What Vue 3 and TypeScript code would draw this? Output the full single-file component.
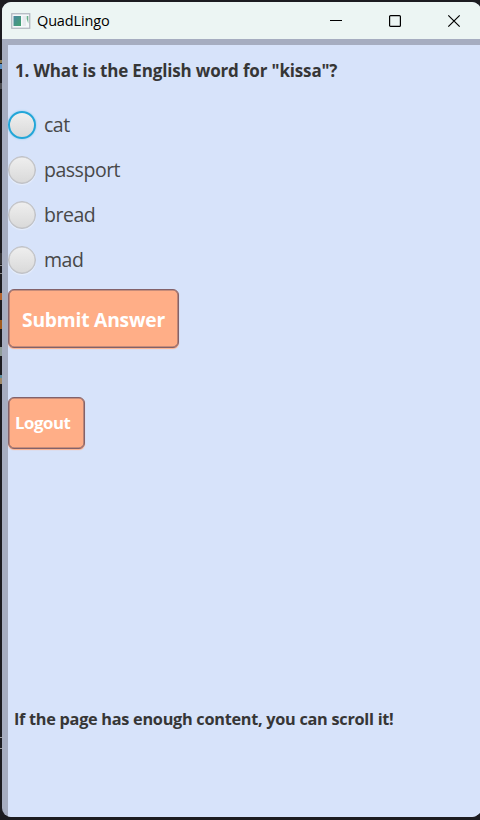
<script setup lang="ts">
import { ref } from 'vue'

interface Speck {
  top: number
  height: number
  color: string
}

const answers: string[] = ['cat', 'passport', 'bread', 'mad']
const focused = ref<string>('cat')

const specks: Speck[] = [
  { top: 60, height: 3, color: '#8a7a50' },
  { top: 64, height: 5, color: '#5b93c8' },
  { top: 83, height: 6, color: '#4a4b4f' },
  { top: 253, height: 11, color: '#343437' },
  { top: 265, height: 1, color: '#8a8a8c' },
  { top: 273, height: 1, color: '#8a8a8c' },
  { top: 293, height: 7, color: '#b5652f' },
  { top: 320, height: 9, color: '#a05a1c' },
  { top: 347, height: 9, color: '#8f9c98' },
  { top: 375, height: 3, color: '#5e8ea0' },
  { top: 378, height: 6, color: '#a08a68' },
  { top: 737, height: 1, color: '#9a9a9c' },
  { top: 748, height: 1, color: '#9a9a9c' },
]
</script>

<template>
  <div class="desktop">
    <span
      v-for="s in specks"
      :key="s.top"
      class="speck"
      :style="{ top: s.top + 'px', height: s.height + 'px', background: s.color }"
    ></span>
    <div class="window">
      <header class="titlebar">
        <svg class="app-icon" width="20" height="16" viewBox="0 0 20 16">
          <defs>
            <linearGradient id="tile" x1="0" y1="0" x2="1" y2="1">
              <stop offset="0" stop-color="#4a86a0" />
              <stop offset="1" stop-color="#43a46f" />
            </linearGradient>
          </defs>
          <rect x="0.75" y="0.75" width="18" height="14.5" fill="#f5f8fa" stroke="#aeb4bd" stroke-width="1.2" />
          <rect x="2.5" y="3" width="7.5" height="10" fill="url(#tile)" />
          <rect x="11.5" y="3" width="3.5" height="10" fill="#e6eaee" />
          <path d="M15.7 3H17.3V10.5L15.7 6Z" fill="#6bb08b" />
        </svg>
        <span class="app-name">QuadLingo</span>
        <div class="controls">
          <svg width="14" height="14" viewBox="0 0 14 14"><path d="M1 6.5H13" /></svg>
          <svg width="14" height="14" viewBox="0 0 14 14"><rect x="1.6" y="1.6" width="10.8" height="10.8" rx="1" /></svg>
          <svg width="14" height="14" viewBox="0 0 14 14"><path d="M1.3 1.3L12.7 12.7M12.7 1.3L1.3 12.7" /></svg>
        </div>
      </header>
      <main class="page">
        <h1 class="question"><span>1. What is the English word for "kissa"?</span></h1>
        <div class="answers">
          <label v-for="a in answers" :key="a" class="answer" @click="focused = a">
            <span class="radio" :class="{ focused: focused === a }"></span>
            <span class="answer-text">{{ a }}</span>
          </label>
        </div>
        <button class="button submit"><span>Submit Answer</span></button>
        <button class="button logout"><span>Logout</span></button>
        <p class="hint"><span>If the page has enough content, you can scroll it!</span></p>
      </main>
    </div>
  </div>
</template>

<style>
body {
  margin: 0;
  overflow: hidden;
}
</style>

<style scoped>
.desktop {
  position: relative;
  box-sizing: border-box;
  width: 480px;
  height: 820px;
  padding: 2px 0 3px 2px;
  background: #1c1c20;
  font-family: 'Open Sans', 'Noto Sans', sans-serif;
  overflow: hidden;
}
.speck {
  position: absolute;
  left: 0;
  width: 2px;
}
.window {
  position: relative;
  display: flex;
  flex-direction: column;
  width: 479px;
  height: 815px;
  border-radius: 9px;
  background: #a6adc0;
  overflow: hidden;
}
.titlebar {
  display: flex;
  align-items: center;
  flex: none;
  height: 37px;
  padding-left: 9px;
  background: #ecf5f3;
}
.app-icon {
  display: block;
}
.app-name {
  margin-left: 6px;
  font-size: 14.5px;
  line-height: 20px;
  letter-spacing: -0.15px;
  color: #000;
}
.controls {
  display: flex;
  gap: 45px;
  margin-left: auto;
  margin-right: 20px;
}
.controls svg {
  display: block;
  fill: none;
  stroke: #000;
  stroke-width: 1.2;
}
.page {
  display: flex;
  flex-direction: column;
  align-items: flex-start;
  flex: 1;
  margin: 6px 0 0 6px;
  background: #d7e3fa;
}
.question,
.hint {
  margin: 0;
  padding-left: 6px;
  font-weight: 700;
  line-height: 24px;
  color: #363636;
  white-space: nowrap;
}
.question {
  margin-top: 14px;
  padding-left: 7px;
  font-size: 17px;
  letter-spacing: -0.16px;
}
.answers {
  display: flex;
  flex-direction: column;
  gap: 17px;
  margin-top: 27.5px;
}
.answer {
  display: flex;
  align-items: center;
  height: 28px;
}
.radio {
  box-sizing: border-box;
  width: 28px;
  height: 28px;
  border: 1px solid #bfc0c4;
  border-radius: 50%;
  background: linear-gradient(#efefef, #d9d9d9);
  box-shadow: inset 0 0 0 0.5px #c4c5c8, 0 1px 1px #e8effb;
}
.radio.focused {
  border: 2px solid #22a6d8;
  box-shadow: 0 0 2px #7cc6ea;
}
.answer-text {
  margin-left: 8px;
  font-size: 19.5px;
  line-height: 28px;
  letter-spacing: -0.48px;
  color: #484848;
}
.button {
  box-sizing: border-box;
  display: flex;
  align-items: center;
  padding: 0;
  border: 1px solid #83626a;
  border-radius: 6px;
  background: #ffae87;
  box-shadow: inset 0 0 0 0.6px #8f6a6c, 0 1px 1px #ffae87;
  color: #fff;
  font-family: inherit;
  font-weight: 700;
  white-space: nowrap;
}
.submit {
  width: 171px;
  height: 59px;
  margin-top: 15.5px;
  padding-top: 1px;
  padding-left: 13px;
  font-size: 19.3px;
  letter-spacing: -0.23px;
}
.logout {
  width: 77px;
  height: 52px;
  margin-top: 49px;
  padding-bottom: 2px;
  padding-left: 6px;
  font-size: 16.8px;
  letter-spacing: -0.45px;
}
.hint {
  margin-top: 258px;
  font-size: 16.3px;
  letter-spacing: -0.28px;
}
</style>
